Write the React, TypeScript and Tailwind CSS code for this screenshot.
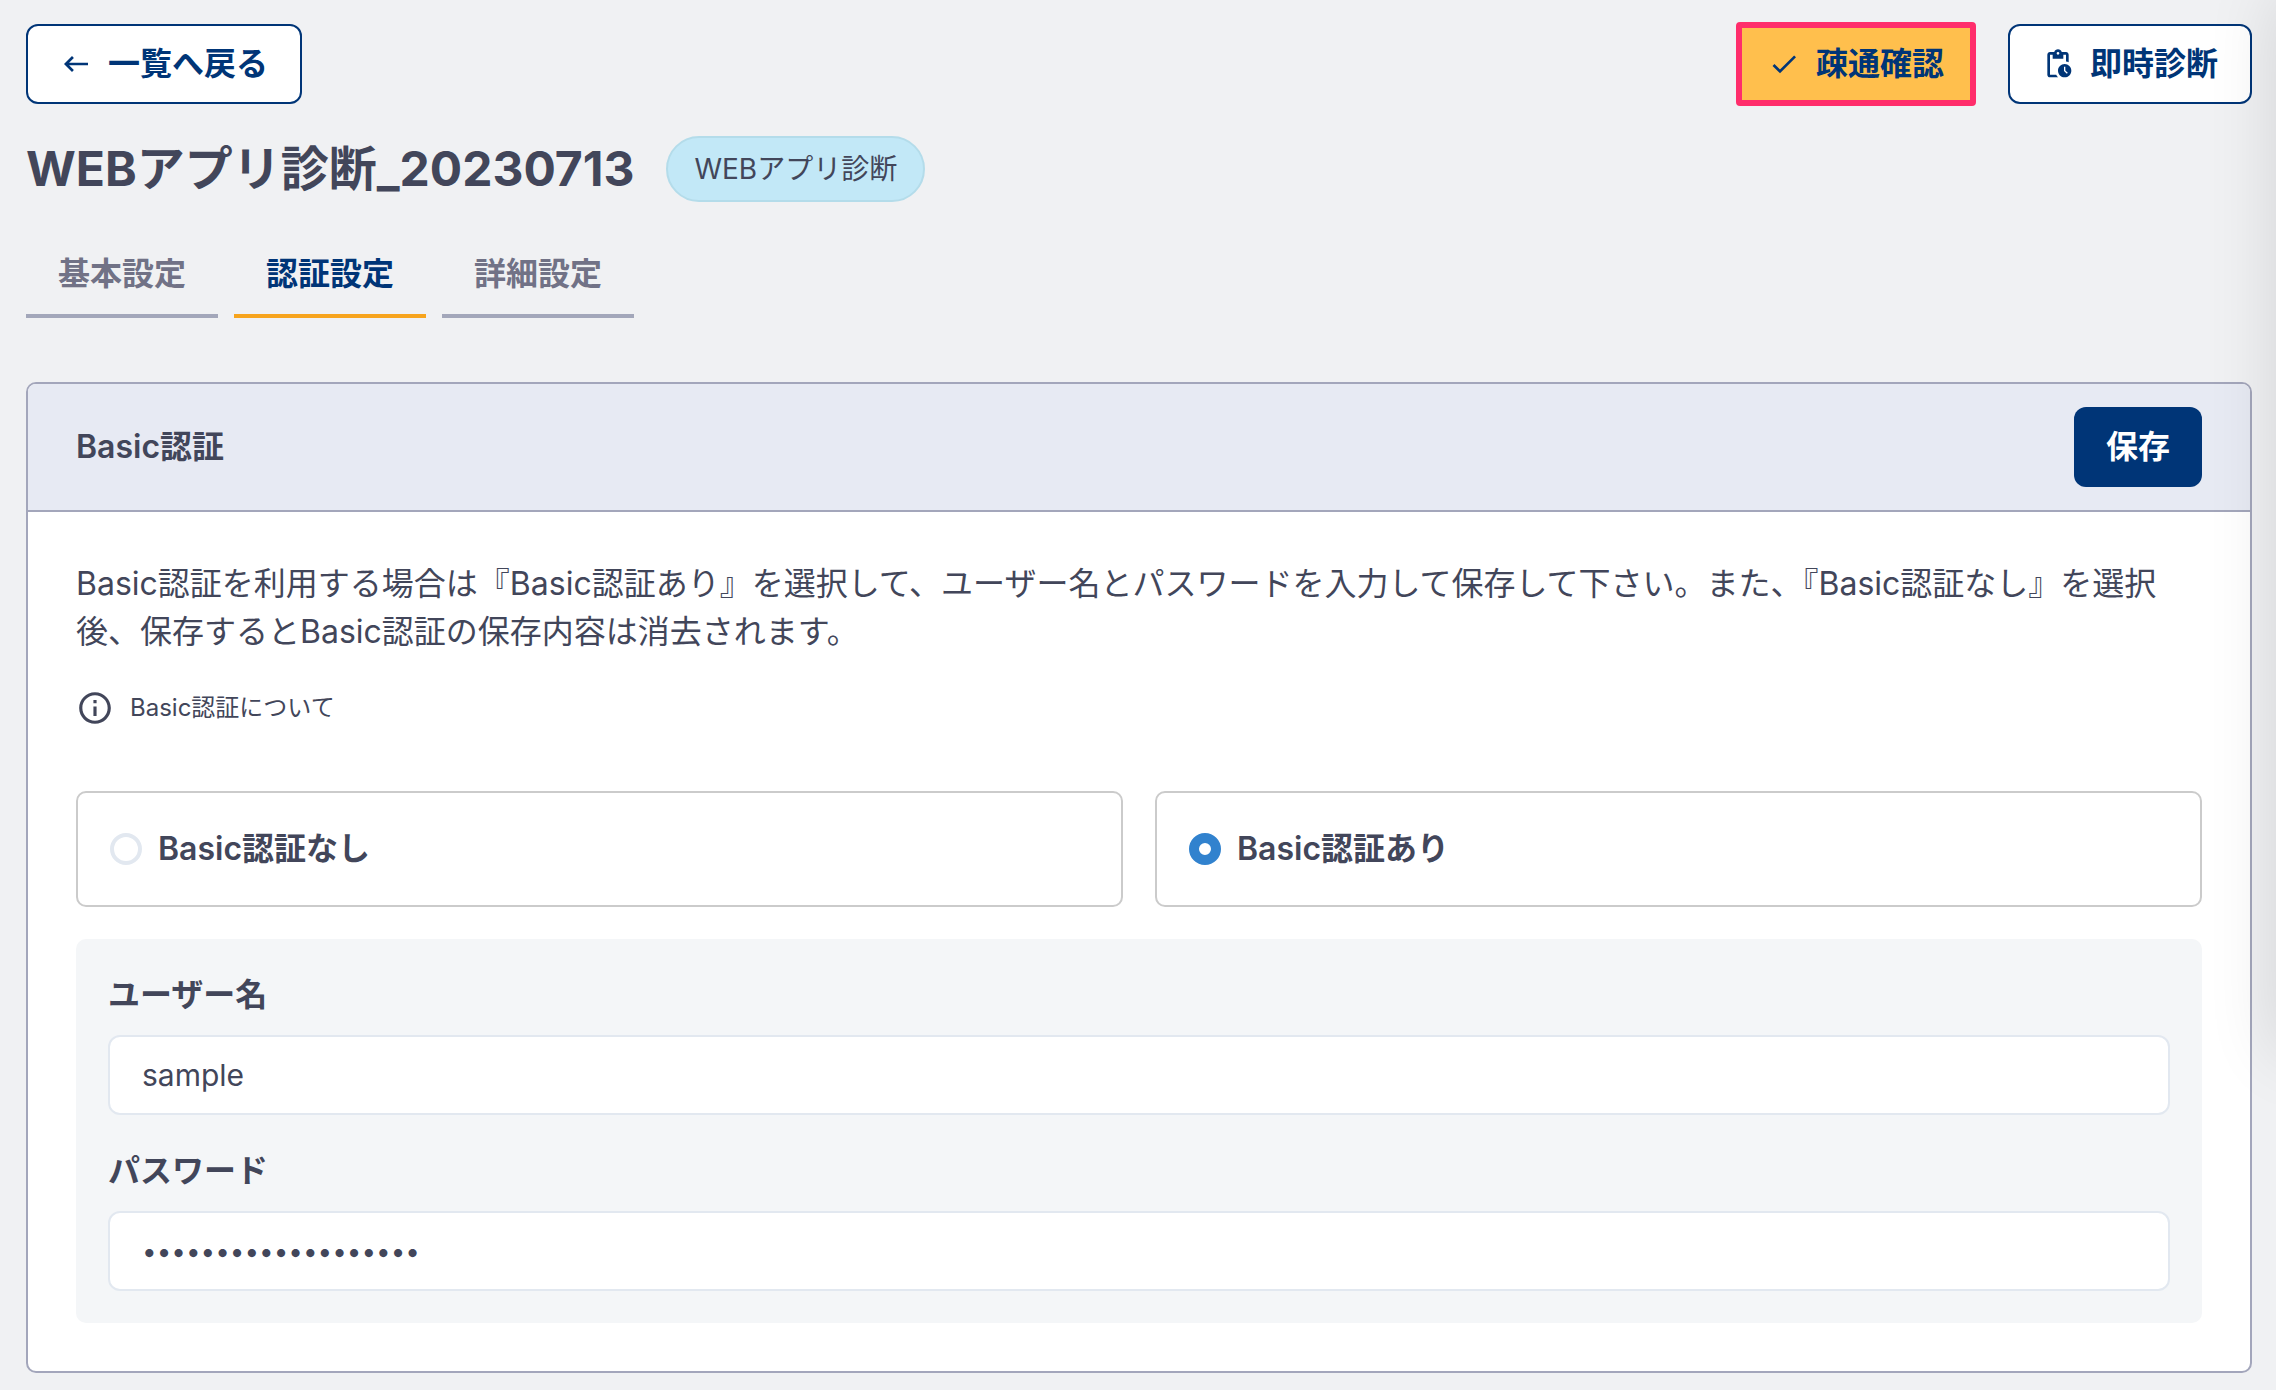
import { useState } from 'react';
import type { ReactNode } from 'react';
import { MdCheck, MdInfoOutline, MdKeyboardBackspace, MdPendingActions } from 'react-icons/md';

const tabs = ['基本設定', '認証設定', '詳細設定'];

interface RadioCardProps {
  value: string;
  checked: boolean;
  onChange: (value: string) => void;
  children: ReactNode;
}

function RadioCard({ value, checked, onChange, children }: RadioCardProps) {
  return (
    <label className="flex flex-1 items-center gap-4 rounded-[10px] border-2 border-[#cbcbcb] px-8 py-8 text-[32px] leading-[48px] font-semibold">
      <input
        type="radio"
        name="basic-auth"
        value={value}
        checked={checked}
        onChange={() => onChange(value)}
        className="size-8 shrink-0 appearance-none rounded-full border-4 border-[#e2e8f0] bg-white checked:border-[10px] checked:border-[#3182ce]"
      />
      {children}
    </label>
  );
}

interface TextFieldProps {
  id: string;
  label: string;
  type: 'text' | 'password';
  defaultValue: string;
}

function TextField({ id, label, type, defaultValue }: TextFieldProps) {
  return (
    <div className="flex flex-col gap-4">
      <label htmlFor={id} className="text-[32px] leading-[48px] font-semibold">
        {label}
      </label>
      <input
        id={id}
        type={type}
        defaultValue={defaultValue}
        className={
          type === 'password'
            ? 'h-20 w-full rounded-xl border-2 border-[#e2e8f0] bg-white px-8 text-[26px] outline-none'
            : 'h-20 w-full rounded-xl border-2 border-[#e2e8f0] bg-white px-8 text-[30px] outline-none'
        }
      />
    </div>
  );
}

export default function App() {
  const [activeTab, setActiveTab] = useState('認証設定');
  const [auth, setAuth] = useState('on');

  return (
    <div className="relative min-h-screen overflow-hidden bg-[#f0f1f3] pt-[22px] pr-6 pb-4 pl-[26px] font-[Inter,'Noto_Sans_CJK_JP',sans-serif] text-[#42465a]">
      <header className="flex items-center justify-between">
        <a
          href="#list"
          className="flex h-20 items-center gap-4 rounded-xl border-2 border-[#003577] bg-white px-8 text-[32px] font-semibold text-[#003577]"
        >
          <MdKeyboardBackspace className="size-8" />
          一覧へ戻る
        </a>
        <div className="flex items-center gap-8">
          <button className="flex h-[84px] items-center gap-4 rounded-sm border-6 border-[#ff2d6b] bg-[#ffbf4d] px-[26px] text-[32px] font-semibold text-[#003577]">
            <MdCheck className="size-8" />
            疎通確認
          </button>
          <button className="flex h-20 items-center gap-4 rounded-xl border-2 border-[#003577] bg-white px-8 text-[32px] font-semibold text-[#003577]">
            <MdPendingActions className="size-8" />
            即時診断
          </button>
        </div>
      </header>

      <div className="mt-[30px] flex items-center gap-8">
        <h1 className="text-5xl leading-[66px] font-bold">WEBアプリ診断_20230713</h1>
        <span className="rounded-full border-2 border-[#b4dcea] bg-[#c2e8f7] px-[26px] text-[28px] leading-[62px]">
          WEBアプリ診断
        </span>
      </div>

      <nav className="mt-8 flex gap-4">
        {tabs.map((tab) => (
          <button
            key={tab}
            onClick={() => setActiveTab(tab)}
            className={
              tab === activeTab
                ? 'h-[84px] border-b-4 border-[#f7a41d] px-8 text-[32px] font-semibold text-[#003577]'
                : 'h-[84px] border-b-4 border-[#a3a7ba] px-8 text-[32px] font-semibold text-[#717286]'
            }
          >
            {tab}
          </button>
        ))}
      </nav>

      <section className="mt-16 overflow-hidden rounded-[10px] border-2 border-[#a3a6bb] bg-white">
        <div className="flex items-center justify-between border-b-2 border-[#a3a6bb] bg-[#e7eaf3] px-12 py-[23px]">
          <h2 className="text-[32px] font-semibold">Basic認証</h2>
          <button className="h-20 rounded-xl bg-[#003577] px-8 text-[32px] font-semibold text-white">保存</button>
        </div>

        <div className="p-12">
          <p className="text-[32px] leading-[48px]">
            Basic認証を利用する場合は『Basic認証あり』を選択して、ユーザー名とパスワードを入力して保存して下さい。また、『Basic認証なし』を選択後、保存するとBasic認証の保存内容は消去されます。
          </p>
          <a href="#about" className="mt-8 flex w-fit items-center gap-4 text-2xl leading-10">
            <MdInfoOutline className="size-[38px]" />
            Basic認証について
          </a>

          <div className="mt-[63px] flex gap-8">
            <RadioCard value="off" checked={auth === 'off'} onChange={setAuth}>
              Basic認証なし
            </RadioCard>
            <RadioCard value="on" checked={auth === 'on'} onChange={setAuth}>
              Basic認証あり
            </RadioCard>
          </div>

          {auth === 'on' && (
            <div className="mt-8 flex flex-col gap-8 rounded-[10px] bg-[#f4f6f8] p-8">
              <TextField id="username" label="ユーザー名" type="text" defaultValue="sample" />
              <TextField id="password" label="パスワード" type="password" defaultValue="samplepassword12345" />
            </div>
          )}
        </div>
      </section>

      {/* shadow cast by the closed drawer */}
      <div className="pointer-events-none absolute -top-2 left-full h-[1060px] w-40 shadow-[0_0_70px_rgba(0,0,0,0.12)]" />
    </div>
  );
}
